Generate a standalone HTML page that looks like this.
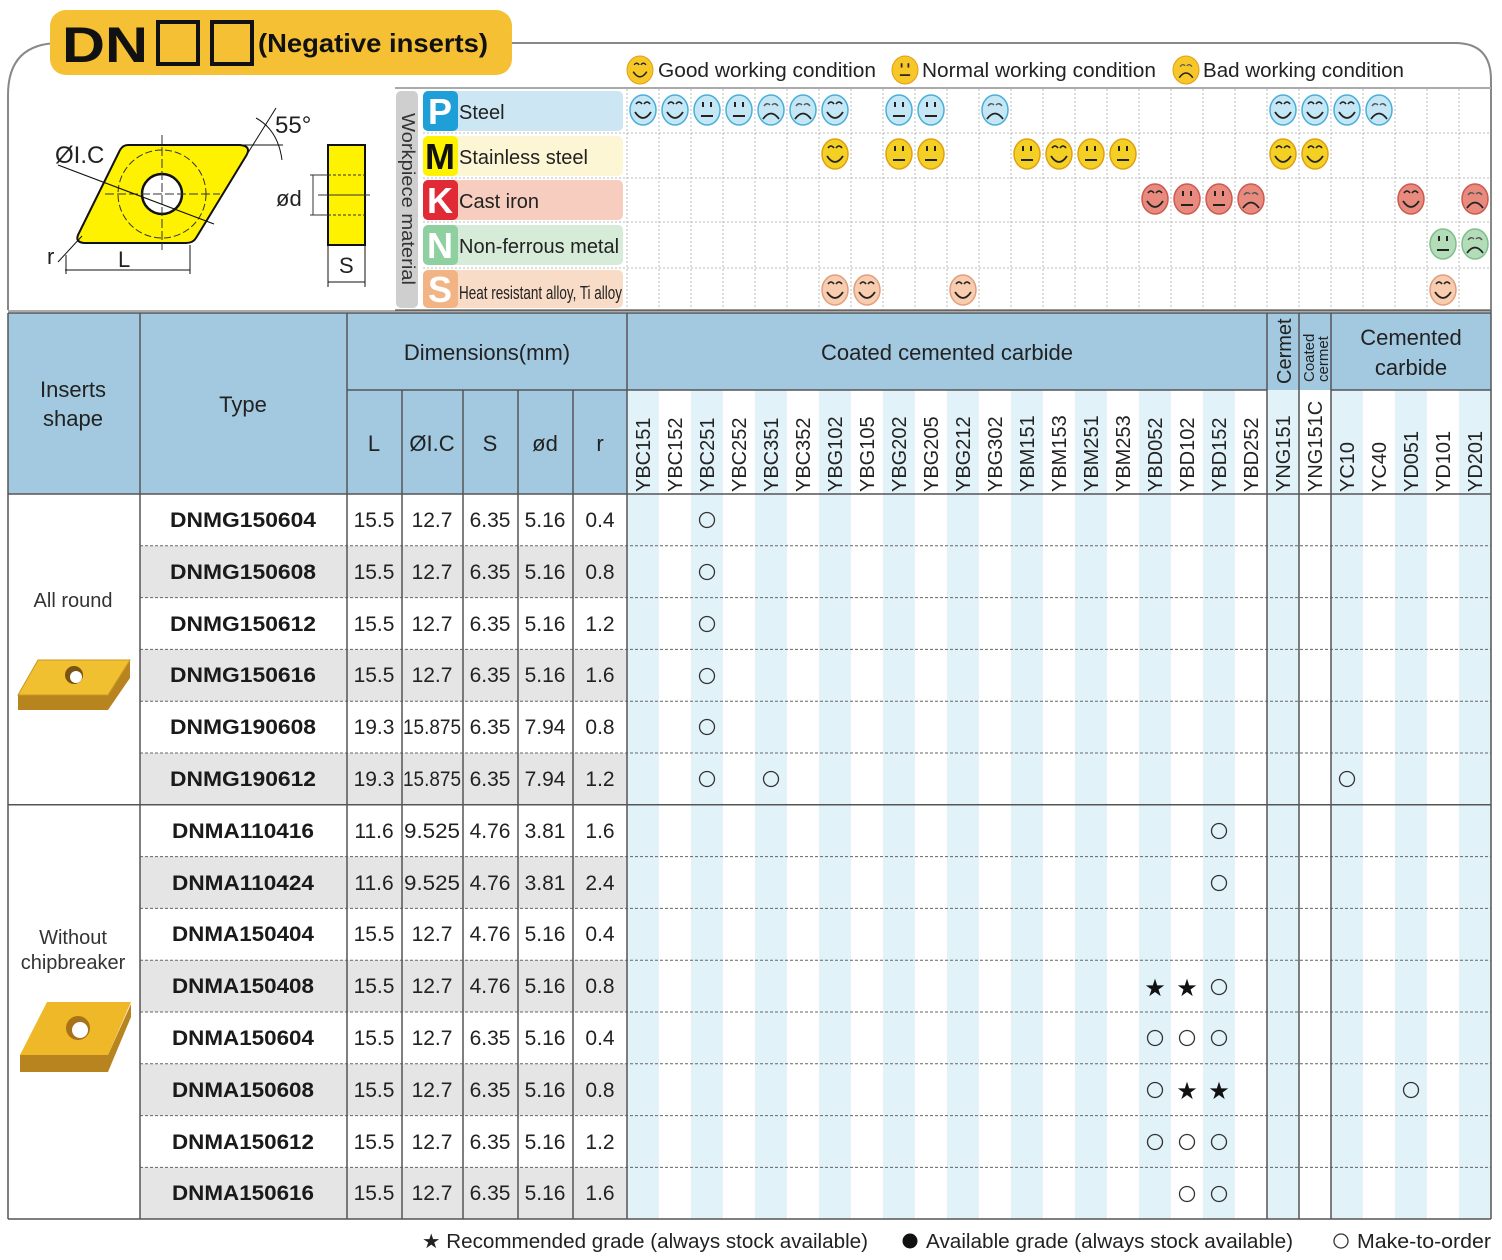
<!DOCTYPE html>
<html><head><meta charset="utf-8"><style>
html,body{margin:0;padding:0;background:#fff;width:1502px;height:1260px;overflow:hidden}
svg{display:block;font-family:"Liberation Sans",sans-serif}
</style></head><body>
<svg width="1502" height="1260" viewBox="0 0 1502 1260" xmlns="http://www.w3.org/2000/svg">
<defs>
<g id="fg"><path d="M-7,-6 q3,-4 6,0 M1,-6 q3,-4 6,0" fill="none" stroke="#222" stroke-width="1.6"/><path d="M-8,2 q8,12 16,0" fill="none" stroke="#222" stroke-width="1.8"/></g>
<g id="fn"><path d="M-4,-8 v5 M4,-8 v5" stroke="#222" stroke-width="2"/><path d="M-6,6 h12" stroke="#222" stroke-width="2"/></g>
<g id="fb"><path d="M-7,-4 q3,-4 6,-1 M1,-5 q3,-3 6,1" fill="none" stroke="#555" stroke-width="1.4"/><path d="M-8,9 q8,-11 16,0" fill="none" stroke="#222" stroke-width="1.8"/></g>
</defs>

<path d="M8,310 V95 Q8,43 60,43 H1455 Q1491,43 1491,80 V313" fill="none" stroke="#888" stroke-width="2"/>
<rect x="50" y="10" width="462" height="65" rx="16" fill="#f5c033"/>
<text x="62" y="62" font-size="50" font-weight="bold" fill="#111" textLength="86" lengthAdjust="spacingAndGlyphs">DN</text>
<rect x="158" y="22" width="40" height="42" fill="none" stroke="#111" stroke-width="4"/>
<rect x="212" y="22" width="40" height="42" fill="none" stroke="#111" stroke-width="4"/>
<text x="258" y="52" font-size="26" font-weight="bold" fill="#111" textLength="230" lengthAdjust="spacingAndGlyphs">(Negative inserts)</text>

<g transform="translate(640,70)"><ellipse rx="13" ry="14" fill="#f7c628" stroke="#e0a010"/><use href="#fg" transform="scale(0.85)"/></g>
<text x="658" y="77" font-size="20" fill="#222" textLength="218" lengthAdjust="spacingAndGlyphs">Good working condition</text>
<g transform="translate(905,70)"><ellipse rx="13" ry="14" fill="#f7c628" stroke="#e0a010"/><use href="#fn" transform="scale(0.85)"/></g>
<text x="922" y="77" font-size="20" fill="#222" textLength="234" lengthAdjust="spacingAndGlyphs">Normal working condition</text>
<g transform="translate(1186,70)"><ellipse rx="13" ry="14" fill="#f7c628" stroke="#e0a010"/><use href="#fb" transform="scale(0.85)"/></g>
<text x="1203" y="77" font-size="20" fill="#222" textLength="201" lengthAdjust="spacingAndGlyphs">Bad working condition</text>

<!-- insert drawing -->
<path d="M128,145 H240 Q252,146 246,156 L196,238 Q193,243 186,243 H84 Q74,242 79,233 L120,150 Q123,145 128,145 Z" fill="#fff200" stroke="#111" stroke-width="2"/>
<circle cx="162" cy="194" r="44" fill="none" stroke="#333" stroke-dasharray="7,3"/>
<circle cx="162" cy="194" r="20" fill="#fff" stroke="#111" stroke-width="2.5"/>
<path d="M162,135 V250 M105,194 H220" stroke="#333" stroke-dasharray="9,3"/>
<path d="M58,165 L214,224" stroke="#111" stroke-width="1.2"/>
<text x="55" y="163" font-size="24" fill="#222">ØI.C</text>
<path d="M246,156 L276,108 M240,145 H283" stroke="#111" stroke-width="1"/>
<path d="M256,118 Q278,130 282,160" fill="none" stroke="#111"/>
<text x="275" y="133" font-size="24" fill="#222">55°</text>
<path d="M58,262 L82,236 M65,270 H190 M66,255 V274 M190,245 V274" stroke="#111" stroke-width="1"/>
<text x="47" y="264" font-size="22" fill="#222">r</text>
<text x="118" y="267" font-size="22" fill="#222">L</text>
<rect x="328" y="145" width="37" height="100" fill="#fff200" stroke="#111" stroke-width="2"/>
<path d="M328,175 H365 M328,215 H365" stroke="#333" stroke-dasharray="3,2"/>
<path d="M318,195 H370 M310,175 H328 M310,215 H328 M313,175 V215" stroke="#333"/>
<text x="276" y="206" font-size="22" fill="#222">ød</text>
<path d="M328,245 V287 M365,245 V287 M328,282 H365" stroke="#111"/>
<text x="339" y="273" font-size="22" fill="#222">S</text>

<!-- workpiece section -->
<path d="M395,88 H1491" stroke="#aaa" stroke-width="2"/>
<rect x="396" y="91" width="22" height="217" rx="5" fill="#cfcfcf"/>
<text transform="translate(402,113) rotate(90)" font-size="18" fill="#333" textLength="172" lengthAdjust="spacingAndGlyphs">Workpiece material</text>
<rect x="423" y="91" width="200" height="40" rx="5" fill="#cce7f3"/>
<rect x="423" y="91" width="35" height="40" rx="5" fill="#1e9fd8"/>
<text x="440" y="124" text-anchor="middle" font-size="36" font-weight="bold" fill="#fff">P</text>
<text x="459" y="119" font-size="20" fill="#222">Steel</text>
<rect x="423" y="136" width="200" height="40" rx="5" fill="#fdf6d4"/>
<rect x="423" y="136" width="35" height="40" rx="5" fill="#fff200"/>
<text x="440" y="169" text-anchor="middle" font-size="36" font-weight="bold" fill="#111">M</text>
<text x="459" y="164" font-size="20" fill="#222">Stainless steel</text>
<rect x="423" y="180" width="200" height="40" rx="5" fill="#f6cdbf"/>
<rect x="423" y="180" width="35" height="40" rx="5" fill="#e02a35"/>
<text x="440" y="213" text-anchor="middle" font-size="36" font-weight="bold" fill="#fff">K</text>
<text x="459" y="208" font-size="20" fill="#222">Cast iron</text>
<rect x="423" y="225" width="200" height="40" rx="5" fill="#d6ebd8"/>
<rect x="423" y="225" width="35" height="40" rx="5" fill="#8fd0a0"/>
<text x="440" y="258" text-anchor="middle" font-size="36" font-weight="bold" fill="#fff">N</text>
<text x="459" y="253" font-size="20" fill="#222">Non-ferrous metal</text>
<rect x="423" y="270" width="200" height="38" rx="5" fill="#f9dcc7"/>
<rect x="423" y="270" width="35" height="38" rx="5" fill="#f2b385"/>
<text x="440" y="302" text-anchor="middle" font-size="36" font-weight="bold" fill="#fff">S</text>
<text x="459" y="299" font-size="18" fill="#222" textLength="163" lengthAdjust="spacingAndGlyphs">Heat resistant alloy, Ti alloy</text>
<g stroke="#bbb" stroke-dasharray="2,2">
<path d="M423,133 H1491 M423,178 H1491 M423,222 H1491 M423,268 H1491"/>
<path d="M627,89V310 M659,89V310 M691,89V310 M723,89V310 M755,89V310 M787,89V310 M819,89V310 M851,89V310 M883,89V310 M915,89V310 M947,89V310 M979,89V310 M1011,89V310 M1043,89V310 M1075,89V310 M1107,89V310 M1139,89V310 M1171,89V310 M1203,89V310 M1235,89V310 M1267,89V310 M1299,89V310 M1331,89V310 M1363,89V310 M1395,89V310 M1427,89V310 M1459,89V310"/>
</g>
<path d="M395,310 H1491" stroke="#777" stroke-width="1.5"/>

<g stroke-width="1.5">
<g fill="#c4e6f5" stroke="#48b0d8">
<ellipse cx="643" cy="110" rx="13" ry="15"/><ellipse cx="675" cy="110" rx="13" ry="15"/><ellipse cx="707" cy="110" rx="13" ry="15"/><ellipse cx="739" cy="110" rx="13" ry="15"/><ellipse cx="771" cy="110" rx="13" ry="15"/><ellipse cx="803" cy="110" rx="13" ry="15"/><ellipse cx="835" cy="110" rx="13" ry="15"/><ellipse cx="899" cy="110" rx="13" ry="15"/><ellipse cx="931" cy="110" rx="13" ry="15"/><ellipse cx="995" cy="110" rx="13" ry="15"/><ellipse cx="1283" cy="110" rx="13" ry="15"/><ellipse cx="1315" cy="110" rx="13" ry="15"/><ellipse cx="1347" cy="110" rx="13" ry="15"/><ellipse cx="1379" cy="110" rx="13" ry="15"/>
</g>
<g fill="#f5d024" stroke="#e0a010">
<ellipse cx="835" cy="154" rx="13" ry="15"/><ellipse cx="899" cy="154" rx="13" ry="15"/><ellipse cx="931" cy="154" rx="13" ry="15"/><ellipse cx="1027" cy="154" rx="13" ry="15"/><ellipse cx="1059" cy="154" rx="13" ry="15"/><ellipse cx="1091" cy="154" rx="13" ry="15"/><ellipse cx="1123" cy="154" rx="13" ry="15"/><ellipse cx="1283" cy="154" rx="13" ry="15"/><ellipse cx="1315" cy="154" rx="13" ry="15"/>
</g>
<g fill="#e88a7e" stroke="#cc5a50">
<ellipse cx="1155" cy="199" rx="13" ry="15"/><ellipse cx="1187" cy="199" rx="13" ry="15"/><ellipse cx="1219" cy="199" rx="13" ry="15"/><ellipse cx="1251" cy="199" rx="13" ry="15"/><ellipse cx="1411" cy="199" rx="13" ry="15"/><ellipse cx="1475" cy="199" rx="13" ry="15"/>
</g>
<g fill="#b3dcb9" stroke="#80bf8c">
<ellipse cx="1443" cy="244" rx="13" ry="15"/><ellipse cx="1475" cy="244" rx="13" ry="15"/>
</g>
<g fill="#f8ccae" stroke="#e0a080">
<ellipse cx="835" cy="290" rx="13" ry="15"/><ellipse cx="867" cy="290" rx="13" ry="15"/><ellipse cx="963" cy="290" rx="13" ry="15"/><ellipse cx="1443" cy="290" rx="13" ry="15"/>
</g>
</g>
<use href="#fg" x="643" y="110"/><use href="#fg" x="675" y="110"/><use href="#fn" x="707" y="110"/><use href="#fn" x="739" y="110"/><use href="#fb" x="771" y="110"/><use href="#fb" x="803" y="110"/><use href="#fg" x="835" y="110"/><use href="#fn" x="899" y="110"/><use href="#fn" x="931" y="110"/><use href="#fb" x="995" y="110"/><use href="#fg" x="1283" y="110"/><use href="#fg" x="1315" y="110"/><use href="#fg" x="1347" y="110"/><use href="#fb" x="1379" y="110"/>
<use href="#fg" x="835" y="154"/><use href="#fn" x="899" y="154"/><use href="#fn" x="931" y="154"/><use href="#fn" x="1027" y="154"/><use href="#fg" x="1059" y="154"/><use href="#fn" x="1091" y="154"/><use href="#fn" x="1123" y="154"/><use href="#fg" x="1283" y="154"/><use href="#fg" x="1315" y="154"/>
<use href="#fg" x="1155" y="199"/><use href="#fn" x="1187" y="199"/><use href="#fn" x="1219" y="199"/><use href="#fb" x="1251" y="199"/><use href="#fg" x="1411" y="199"/><use href="#fb" x="1475" y="199"/>
<use href="#fn" x="1443" y="244"/><use href="#fb" x="1475" y="244"/>
<use href="#fg" x="835" y="290"/><use href="#fg" x="867" y="290"/><use href="#fg" x="963" y="290"/><use href="#fg" x="1443" y="290"/>

<rect x="8" y="313" width="1483" height="181" fill="#a2c9e0"/>
<rect x="627" y="390" width="864" height="829" fill="#fff"/>
<g fill="#e2f2f9">
<rect x="627" y="390" width="32" height="829"/><rect x="691" y="390" width="32" height="829"/><rect x="755" y="390" width="32" height="829"/><rect x="819" y="390" width="32" height="829"/><rect x="883" y="390" width="32" height="829"/><rect x="947" y="390" width="32" height="829"/><rect x="1011" y="390" width="32" height="829"/><rect x="1075" y="390" width="32" height="829"/><rect x="1139" y="390" width="32" height="829"/><rect x="1203" y="390" width="32" height="829"/><rect x="1267" y="390" width="32" height="829"/><rect x="1331" y="390" width="32" height="829"/><rect x="1395" y="390" width="32" height="829"/><rect x="1459" y="390" width="32" height="829"/>
</g>
<g fill="#e5e5e5">
<rect x="140" y="545.8" width="487" height="51.8"/><rect x="140" y="649.4" width="487" height="51.8"/><rect x="140" y="753" width="487" height="51.8"/><rect x="140" y="856.6" width="487" height="51.8"/><rect x="140" y="960.2" width="487" height="51.8"/><rect x="140" y="1063.8" width="487" height="51.8"/><rect x="140" y="1167.4" width="487" height="51.8"/>
</g>
<g stroke="#666" stroke-dasharray="3,2" stroke-width="1">
<path d="M140,545.8H1491 M140,597.6H1491 M140,649.4H1491 M140,701.2H1491 M140,753H1491 M140,856.6H1491 M140,908.4H1491 M140,960.2H1491 M140,1012H1491 M140,1063.8H1491 M140,1115.6H1491 M140,1167.4H1491"/>
</g>
<g stroke="#555" stroke-width="1.5" fill="none">
<path d="M8,313 H1491 M8,494 H1491 M8,804.8 H1491 M8,1219 H1491"/>
<path d="M347,390 H1267 M1331,390 H1491"/>
<path d="M8,313 V1219 M1491,313 V1219 M140,313 V1219 M347,313 V1219 M402,390 V1219 M463,390 V1219 M518,390 V1219 M573,390 V1219 M627,313 V1219 M1267,313 V1219 M1299,313 V1219 M1331,313 V1219"/>
</g>
<path d="M8,311 H1491" stroke="#555" stroke-width="1"/>

<g font-size="22" fill="#222" text-anchor="middle">
<text x="73" y="397">Inserts</text><text x="73" y="426">shape</text>
<text x="243" y="412">Type</text>
<text x="487" y="360">Dimensions(mm)</text>
<text x="374" y="451">L</text><text x="432" y="451">ØI.C</text><text x="490" y="451">S</text><text x="545" y="451">ød</text><text x="600" y="451">r</text>
<text x="947" y="360">Coated cemented carbide</text>
<text x="1411" y="345">Cemented</text><text x="1411" y="375">carbide</text>
</g>
<text transform="translate(1291,384) rotate(-90)" font-size="20" fill="#222">Cermet</text>
<text transform="translate(1314,382) rotate(-90)" font-size="15" fill="#222">Coated</text>
<text transform="translate(1328,382) rotate(-90)" font-size="15" fill="#222">cermet</text>
<g font-size="20" fill="#222">
<text transform="translate(650,492) rotate(-90)">YBC151</text>
<text transform="translate(682,492) rotate(-90)">YBC152</text>
<text transform="translate(714,492) rotate(-90)">YBC251</text>
<text transform="translate(746,492) rotate(-90)">YBC252</text>
<text transform="translate(778,492) rotate(-90)">YBC351</text>
<text transform="translate(810,492) rotate(-90)">YBC352</text>
<text transform="translate(842,492) rotate(-90)">YBG102</text>
<text transform="translate(874,492) rotate(-90)">YBG105</text>
<text transform="translate(906,492) rotate(-90)">YBG202</text>
<text transform="translate(938,492) rotate(-90)">YBG205</text>
<text transform="translate(970,492) rotate(-90)">YBG212</text>
<text transform="translate(1002,492) rotate(-90)">YBG302</text>
<text transform="translate(1034,492) rotate(-90)">YBM151</text>
<text transform="translate(1066,492) rotate(-90)">YBM153</text>
<text transform="translate(1098,492) rotate(-90)">YBM251</text>
<text transform="translate(1130,492) rotate(-90)">YBM253</text>
<text transform="translate(1162,492) rotate(-90)">YBD052</text>
<text transform="translate(1194,492) rotate(-90)">YBD102</text>
<text transform="translate(1226,492) rotate(-90)">YBD152</text>
<text transform="translate(1258,492) rotate(-90)">YBD252</text>
<text transform="translate(1290,492) rotate(-90)">YNG151</text>
<text transform="translate(1322,492) rotate(-90)">YNG151C</text>
<text transform="translate(1354,492) rotate(-90)">YC10</text>
<text transform="translate(1386,492) rotate(-90)">YC40</text>
<text transform="translate(1418,492) rotate(-90)">YD051</text>
<text transform="translate(1450,492) rotate(-90)">YD101</text>
<text transform="translate(1482,492) rotate(-90)">YD201</text>
</g>

<text x="73" y="607" font-size="20" fill="#333" text-anchor="middle">All round</text>
<path d="M18,695 H108 L130,660 V678 L108,710 H18 Z" fill="#b7841f"/>
<path d="M38,660 H130 L108,695 H18 Z" fill="#f0c030" stroke="#c99a20"/>
<circle cx="74" cy="675" r="9" fill="#7a5410"/><circle cx="76" cy="677" r="6" fill="#fff"/>
<text x="73" y="944" font-size="20" fill="#333" text-anchor="middle">Without</text>
<text x="73" y="969" font-size="20" fill="#333" text-anchor="middle">chipbreaker</text>
<path d="M20,1055 H108 L131,1004 V1017 L108,1072 H20 Z" fill="#b7841f"/>
<path d="M47,1002 H131 L108,1055 H20 Z" fill="#eeb828"/>
<circle cx="78" cy="1028" r="12" fill="#a87318"/><circle cx="80" cy="1030" r="8" fill="#fff"/>

<g font-size="21" font-weight="bold" fill="#1a1a1a" text-anchor="middle">
<text x="243" y="527" textLength="146" lengthAdjust="spacingAndGlyphs">DNMG150604</text><text x="243" y="579" textLength="146" lengthAdjust="spacingAndGlyphs">DNMG150608</text><text x="243" y="631" textLength="146" lengthAdjust="spacingAndGlyphs">DNMG150612</text><text x="243" y="682" textLength="146" lengthAdjust="spacingAndGlyphs">DNMG150616</text><text x="243" y="734" textLength="146" lengthAdjust="spacingAndGlyphs">DNMG190608</text><text x="243" y="786" textLength="146" lengthAdjust="spacingAndGlyphs">DNMG190612</text>
<text x="243" y="838" textLength="142" lengthAdjust="spacingAndGlyphs">DNMA110416</text><text x="243" y="890" textLength="142" lengthAdjust="spacingAndGlyphs">DNMA110424</text><text x="243" y="941" textLength="142" lengthAdjust="spacingAndGlyphs">DNMA150404</text><text x="243" y="993" textLength="142" lengthAdjust="spacingAndGlyphs">DNMA150408</text><text x="243" y="1045" textLength="142" lengthAdjust="spacingAndGlyphs">DNMA150604</text><text x="243" y="1097" textLength="142" lengthAdjust="spacingAndGlyphs">DNMA150608</text><text x="243" y="1149" textLength="142" lengthAdjust="spacingAndGlyphs">DNMA150612</text><text x="243" y="1200" textLength="142" lengthAdjust="spacingAndGlyphs">DNMA150616</text>
</g>
<g font-size="21" fill="#222" text-anchor="middle">
<text x="374" y="527">15.5</text><text x="432" y="527">12.7</text><text x="490" y="527">6.35</text><text x="545" y="527">5.16</text><text x="600" y="527">0.4</text>
<text x="374" y="579">15.5</text><text x="432" y="579">12.7</text><text x="490" y="579">6.35</text><text x="545" y="579">5.16</text><text x="600" y="579">0.8</text>
<text x="374" y="631">15.5</text><text x="432" y="631">12.7</text><text x="490" y="631">6.35</text><text x="545" y="631">5.16</text><text x="600" y="631">1.2</text>
<text x="374" y="682">15.5</text><text x="432" y="682">12.7</text><text x="490" y="682">6.35</text><text x="545" y="682">5.16</text><text x="600" y="682">1.6</text>
<text x="374" y="734">19.3</text><text x="432" y="734" textLength="58" lengthAdjust="spacingAndGlyphs">15.875</text><text x="490" y="734">6.35</text><text x="545" y="734">7.94</text><text x="600" y="734">0.8</text>
<text x="374" y="786">19.3</text><text x="432" y="786" textLength="58" lengthAdjust="spacingAndGlyphs">15.875</text><text x="490" y="786">6.35</text><text x="545" y="786">7.94</text><text x="600" y="786">1.2</text>
<text x="374" y="838">11.6</text><text x="432" y="838" textLength="56" lengthAdjust="spacingAndGlyphs">9.525</text><text x="490" y="838">4.76</text><text x="545" y="838">3.81</text><text x="600" y="838">1.6</text>
<text x="374" y="890">11.6</text><text x="432" y="890" textLength="56" lengthAdjust="spacingAndGlyphs">9.525</text><text x="490" y="890">4.76</text><text x="545" y="890">3.81</text><text x="600" y="890">2.4</text>
<text x="374" y="941">15.5</text><text x="432" y="941">12.7</text><text x="490" y="941">4.76</text><text x="545" y="941">5.16</text><text x="600" y="941">0.4</text>
<text x="374" y="993">15.5</text><text x="432" y="993">12.7</text><text x="490" y="993">4.76</text><text x="545" y="993">5.16</text><text x="600" y="993">0.8</text>
<text x="374" y="1045">15.5</text><text x="432" y="1045">12.7</text><text x="490" y="1045">6.35</text><text x="545" y="1045">5.16</text><text x="600" y="1045">0.4</text>
<text x="374" y="1097">15.5</text><text x="432" y="1097">12.7</text><text x="490" y="1097">6.35</text><text x="545" y="1097">5.16</text><text x="600" y="1097">0.8</text>
<text x="374" y="1149">15.5</text><text x="432" y="1149">12.7</text><text x="490" y="1149">6.35</text><text x="545" y="1149">5.16</text><text x="600" y="1149">1.2</text>
<text x="374" y="1200">15.5</text><text x="432" y="1200">12.7</text><text x="490" y="1200">6.35</text><text x="545" y="1200">5.16</text><text x="600" y="1200">1.6</text>
</g>
<g fill="none" stroke="#333" stroke-width="1.3">
<circle cx="707" cy="520" r="7.5"/><circle cx="707" cy="572" r="7.5"/><circle cx="707" cy="624" r="7.5"/><circle cx="707" cy="676" r="7.5"/><circle cx="707" cy="727" r="7.5"/><circle cx="707" cy="779" r="7.5"/><circle cx="771" cy="779" r="7.5"/><circle cx="1347" cy="779" r="7.5"/>
<circle cx="1219" cy="831" r="7.5"/><circle cx="1219" cy="883" r="7.5"/><circle cx="1219" cy="987" r="7.5"/>
<circle cx="1155" cy="1038" r="7.5"/><circle cx="1187" cy="1038" r="7.5"/><circle cx="1219" cy="1038" r="7.5"/>
<circle cx="1155" cy="1090" r="7.5"/><circle cx="1411" cy="1090" r="7.5"/>
<circle cx="1155" cy="1142" r="7.5"/><circle cx="1187" cy="1142" r="7.5"/><circle cx="1219" cy="1142" r="7.5"/>
<circle cx="1187" cy="1194" r="7.5"/><circle cx="1219" cy="1194" r="7.5"/>
</g>
<g font-size="24" fill="#111" text-anchor="middle">
<text x="1155" y="996">★</text><text x="1187" y="996">★</text><text x="1187" y="1099">★</text><text x="1219" y="1099">★</text>
</g>

<g font-size="20" fill="#222">
<text x="422" y="1248" textLength="446" lengthAdjust="spacingAndGlyphs">★ Recommended grade (always stock available)</text>
<circle cx="910" cy="1241" r="7.5" fill="#111"/>
<text x="926" y="1248" textLength="367" lengthAdjust="spacingAndGlyphs">Available grade (always stock available)</text>
<circle cx="1341" cy="1241" r="7" fill="none" stroke="#333" stroke-width="1.3"/>
<text x="1357" y="1248" textLength="134" lengthAdjust="spacingAndGlyphs">Make-to-order</text>
</g>
</svg>
</body></html>
